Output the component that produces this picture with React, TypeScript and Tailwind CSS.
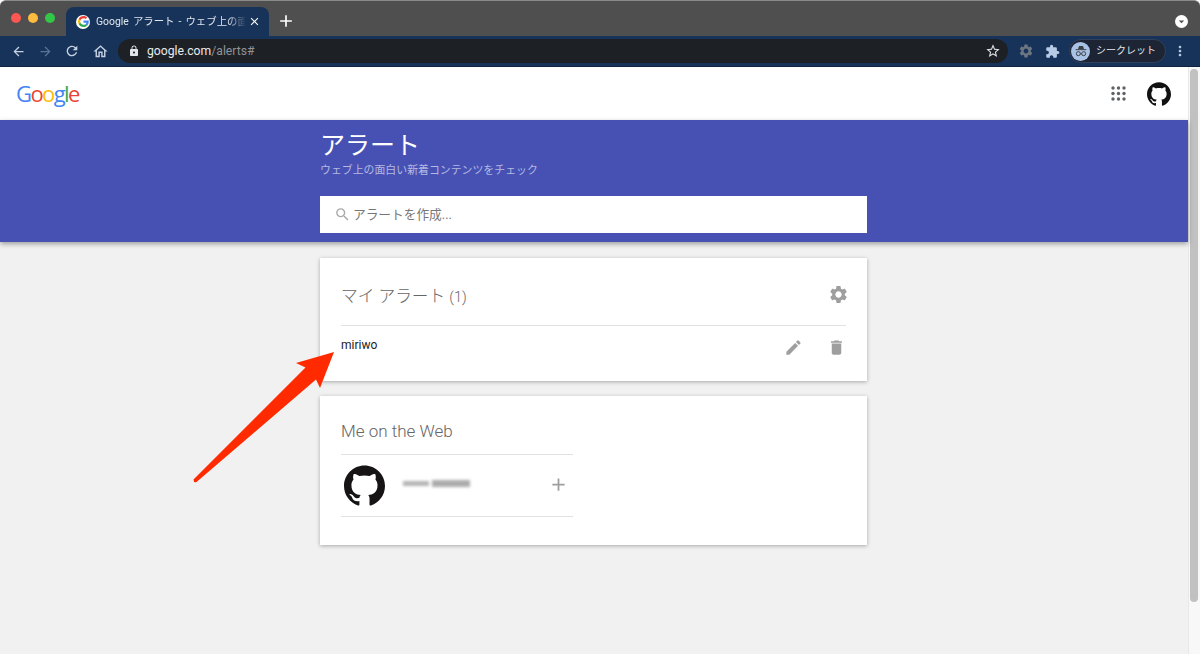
import { MdArrowBack, MdArrowForward, MdRefresh, MdOutlineHome, MdLock, MdStarBorder, MdExtension, MdMoreVert, MdSettings, MdEdit, MdDelete, MdSearch, MdAdd, MdClose, MdArrowDropDown } from 'react-icons/md'
import { SiGithub } from 'react-icons/si'

function GoogleG({ size }: { size: number }) {
  return (
    <svg width={size} height={size} viewBox="0 0 48 48">
      <path fill="#EA4335" d="M24 9.5c3.5 0 6.6 1.2 9.1 3.6l6.8-6.8C35.800 2.400 30.400 0 24 0 14.600 0 6.500 5.400 2.600 13.200l7.900 6.100C12.400 13.700 17.700 9.500 24 9.500z" />
      <path fill="#4285F4" d="M47 24.500c0-1.600-.1-3.100-.4-4.500H24v9h12.900c-.6 3-2.200 5.500-4.700 7.200l7.700 6C44.400 38.100 47 31.900 47 24.500z" />
      <path fill="#FBBC05" d="M10.500 28.700c-.5-1.400-.8-3-.8-4.700s.3-3.300.8-4.700l-7.900-6.100C.9 16.500 0 20.100 0 24s.9 7.500 2.600 10.800l7.900-6.100z" />
      <path fill="#34A853" d="M24 48c6.500 0 11.900-2.100 15.900-5.800l-7.700-6c-2.100 1.400-4.900 2.300-8.200 2.300-6.300 0-11.600-4.200-13.500-9.800l-7.900 6.100C6.500 42.600 14.600 48 24 48z" />
    </svg>
  )
}

function AppsGrid() {
  const dots = [2, 7.5, 13]
  return (
    <svg width="15" height="15" viewBox="0 0 15 15" fill="#5f6368">
      {dots.map((y) => dots.map((x) => <circle key={`${x}-${y}`} cx={x} cy={y} r="1.700" />))}
    </svg>
  )
}

function BrowserChrome() {
  return (
    <div className="shrink-0">
      {/* Tab strip */}
      <div className="h-[36px] bg-[#4f4f4f] border-t border-[#8a8a8a] rounded-t-[6px] flex items-end pl-[11px] pr-[12px]">
        <div className="flex items-center gap-[7px] h-[28px] mb-[4px]">
          <span className="w-[10px] h-[10px] rounded-full bg-[#fc5753]" />
          <span className="w-[10px] h-[10px] rounded-full bg-[#fdbc40]" />
          <span className="w-[10px] h-[10px] rounded-full bg-[#33c748]" />
        </div>
        <div className="ml-[11px] w-[203px] h-[29px] bg-[#183359] rounded-t-[8px] flex items-center pl-[10px] pr-[8px]">
          <span className="w-[14px] h-[14px] rounded-full bg-white flex items-center justify-center shrink-0">
            <GoogleG size={11} />
          </span>
          <span className="ml-[6px] text-[10.400px] text-[#dfe5ee] whitespace-nowrap w-[150px] [word-spacing:1.500px] [mask-image:linear-gradient(to_right,black_88%,transparent)]">Google アラート - ウェブ上の面白</span>
          <MdClose className="ml-auto text-white" size={13} />
        </div>
        <MdAdd className="ml-[7px] mb-[5px] text-white" size={20} />
        <span className="ml-auto mb-[8px] w-[13px] h-[13px] rounded-full bg-white flex items-center justify-center">
          <MdArrowDropDown className="text-[#4f4f4f]" size={15} />
        </span>
      </div>
      {/* Toolbar */}
      <div className="h-[31px] bg-[#183359] flex items-center border-b border-[#0f2440]">
        <div className="flex items-center w-[118px] pl-[11px] gap-[12px] text-[#c5d2e4]">
          <MdArrowBack size={15} />
          <MdArrowForward size={15} className="text-[#5a7396]" />
          <MdRefresh size={16} className="-ml-[1px]" />
          <MdOutlineHome size={17} />
        </div>
        <div className="w-[890px] h-[24px] rounded-full bg-[#1d2024] flex items-center pl-[10px] pr-[7px] text-[12.200px]">
          <MdLock size={12} className="text-[#e3e5e8]" />
          <span className="ml-[7px] text-[#e8eaed]">google.com</span>
          <span className="text-[#8f9399]">/alerts#</span>
          <MdStarBorder size={16} className="ml-auto text-[#e3e5e8]" />
        </div>
        <div className="ml-[10px] flex items-center">
          <MdSettings size={16} className="text-[#6d7682]" />
          <MdExtension size={15} className="ml-[11px] text-[#b7cbe6]" />
          <div className="ml-[9px] w-[97px] h-[24px] rounded-full bg-[#1d2433] border border-[#31415a] flex items-center">
            <span className="w-[19px] h-[19px] ml-[1px] rounded-full bg-[#a9c3e6] flex items-center justify-center">
              <svg width="16" height="16" viewBox="0 0 24 24" fill="none" stroke="#3c4043" strokeWidth="1.500">
                <path d="M7.500 9.500l1.500-5h6l1.500 5z" fill="#3c4043" stroke="none" />
                <path d="M4 10h16" />
                <circle cx="8" cy="16" r="3" />
                <circle cx="16" cy="16" r="3" />
                <path d="M11 16h2" />
              </svg>
            </span>
            <span className="ml-[6px] text-[10px] leading-[22px] text-[#e2e6ec] whitespace-nowrap">シークレット</span>
          </div>
          <MdMoreVert size={16} className="ml-[6px] text-[#b7cbe6]" />
        </div>
      </div>
    </div>
  )
}

function AlertsCard() {
  return (
    <section className="bg-white shadow-[0_1px_4px_rgba(0,0,0,0.3)] h-[123px] px-[21px]">
      <div className="h-[68px] flex items-center justify-between border-b border-[#e2e2e2]">
        <h2 className="text-[16.700px] text-[#666] font-light mt-[11px]">マイ アラート <span className="text-[14.500px]">(1)</span></h2>
        <MdSettings size={21} className="text-[#9e9e9e] -mr-[3px] mt-[6px]" />
      </div>
      <div className="flex justify-between">
        <span className="text-[12px] leading-[20px] text-[#222] mt-[9px]">miriwo</span>
        <div className="flex items-center gap-[24px] mt-[11px] h-[20px]">
          <MdEdit size={19} className="text-[#9e9e9e]" />
          <MdDelete size={19} className="text-[#9e9e9e]" />
        </div>
      </div>
    </section>
  )
}

function WebCard() {
  return (
    <section className="bg-white shadow-[0_1px_4px_rgba(0,0,0,0.3)] h-[149px] px-[21px]">
      <div className="w-[232px]">
        <div className="h-[59px] flex items-end border-b border-[#e2e2e2] pb-[13px]">
          <h2 className="text-[17px] text-[#666] font-light leading-[20px]">Me on the Web</h2>
        </div>
        <div className="h-[62px] flex items-center border-b border-[#e2e2e2]">
          <SiGithub size={41} className="ml-[3px] text-[#161414]" />
          <div className="ml-[18px] -mt-[4px] flex items-center gap-[3px] blur-[1.500px]">
            <span className="w-[26px] h-[5px] bg-[#b4b4b4]" />
            <span className="w-[38px] h-[7px] bg-[#acacac]" />
          </div>
          <MdAdd size={21} className="ml-auto mr-[4px] -mt-[2px] text-[#9e9e9e]" />
        </div>
      </div>
    </section>
  )
}

export default function App() {
  return (
    <div className="relative w-[1200px] h-[654px] overflow-hidden bg-white flex flex-col font-['Roboto','Noto_Sans_CJK_JP',sans-serif]">
      <BrowserChrome />
      <div className="flex-1 flex min-h-0">
        <main className="flex-1 min-w-0 bg-[#f1f1f1] flex flex-col">
          <header className="h-[53px] bg-white flex items-center justify-between pl-[16px] pr-[17px]">
            <div className="font-['Open_Sans',sans-serif] font-medium text-[22px] leading-none tracking-[-1.600px] -mt-[2px]">
              <span className="text-[#4285f4]">G</span>
              <span className="text-[#ea4335]">o</span>
              <span className="text-[#fbbc05]">o</span>
              <span className="text-[#4285f4]">g</span>
              <span className="text-[#34a853]">l</span>
              <span className="text-[#ea4335]">e</span>
            </div>
            <div className="flex items-center gap-[21px]">
              <AppsGrid />
              <SiGithub size={24} className="text-[#111]" />
            </div>
          </header>
          <div className="h-[122px] bg-[#4751b3] shadow-[0_2px_5px_rgba(0,0,0,0.35)] relative z-10 pl-[320px] pt-[11px]">
            <h1 className="text-[25px] leading-[30px] text-white">アラート</h1>
            <p className="text-[10.900px] leading-[16px] text-[#b4b9e2] mt-[2px]">ウェブ上の面白い新着コンテンツをチェック</p>
            <div className="w-[547px] h-[37px] bg-white mt-[17px] flex items-center pl-[14px]">
              <MdSearch size={17} className="text-[#aaa]" />
              <span className="ml-[2px] mt-[1px] text-[12.700px] text-[#777]">アラートを作成...</span>
            </div>
          </div>
          <div className="w-[547px] ml-[320px] mt-[16px] flex flex-col gap-[15px]">
            <AlertsCard />
            <WebCard />
          </div>
        </main>
        {/* Scrollbar */}
        <div className="w-[12px] bg-[#f8f8f8] border-l border-[#e8e8e8] pl-[1px] pt-[2px]">
          <div className="w-[8px] h-[533px] rounded-full bg-[#c1c1c1]" />
        </div>
      </div>
      {/* Annotation arrow */}
      <svg className="absolute inset-0 pointer-events-none" width="1200" height="654">
        <path d="M334 352L296 363L305.500 367.500L193.500 479.500Q193.500 483 196.500 482L316 379.500L320 388Z" fill="#ff2a00" />
      </svg>
    </div>
  )
}
